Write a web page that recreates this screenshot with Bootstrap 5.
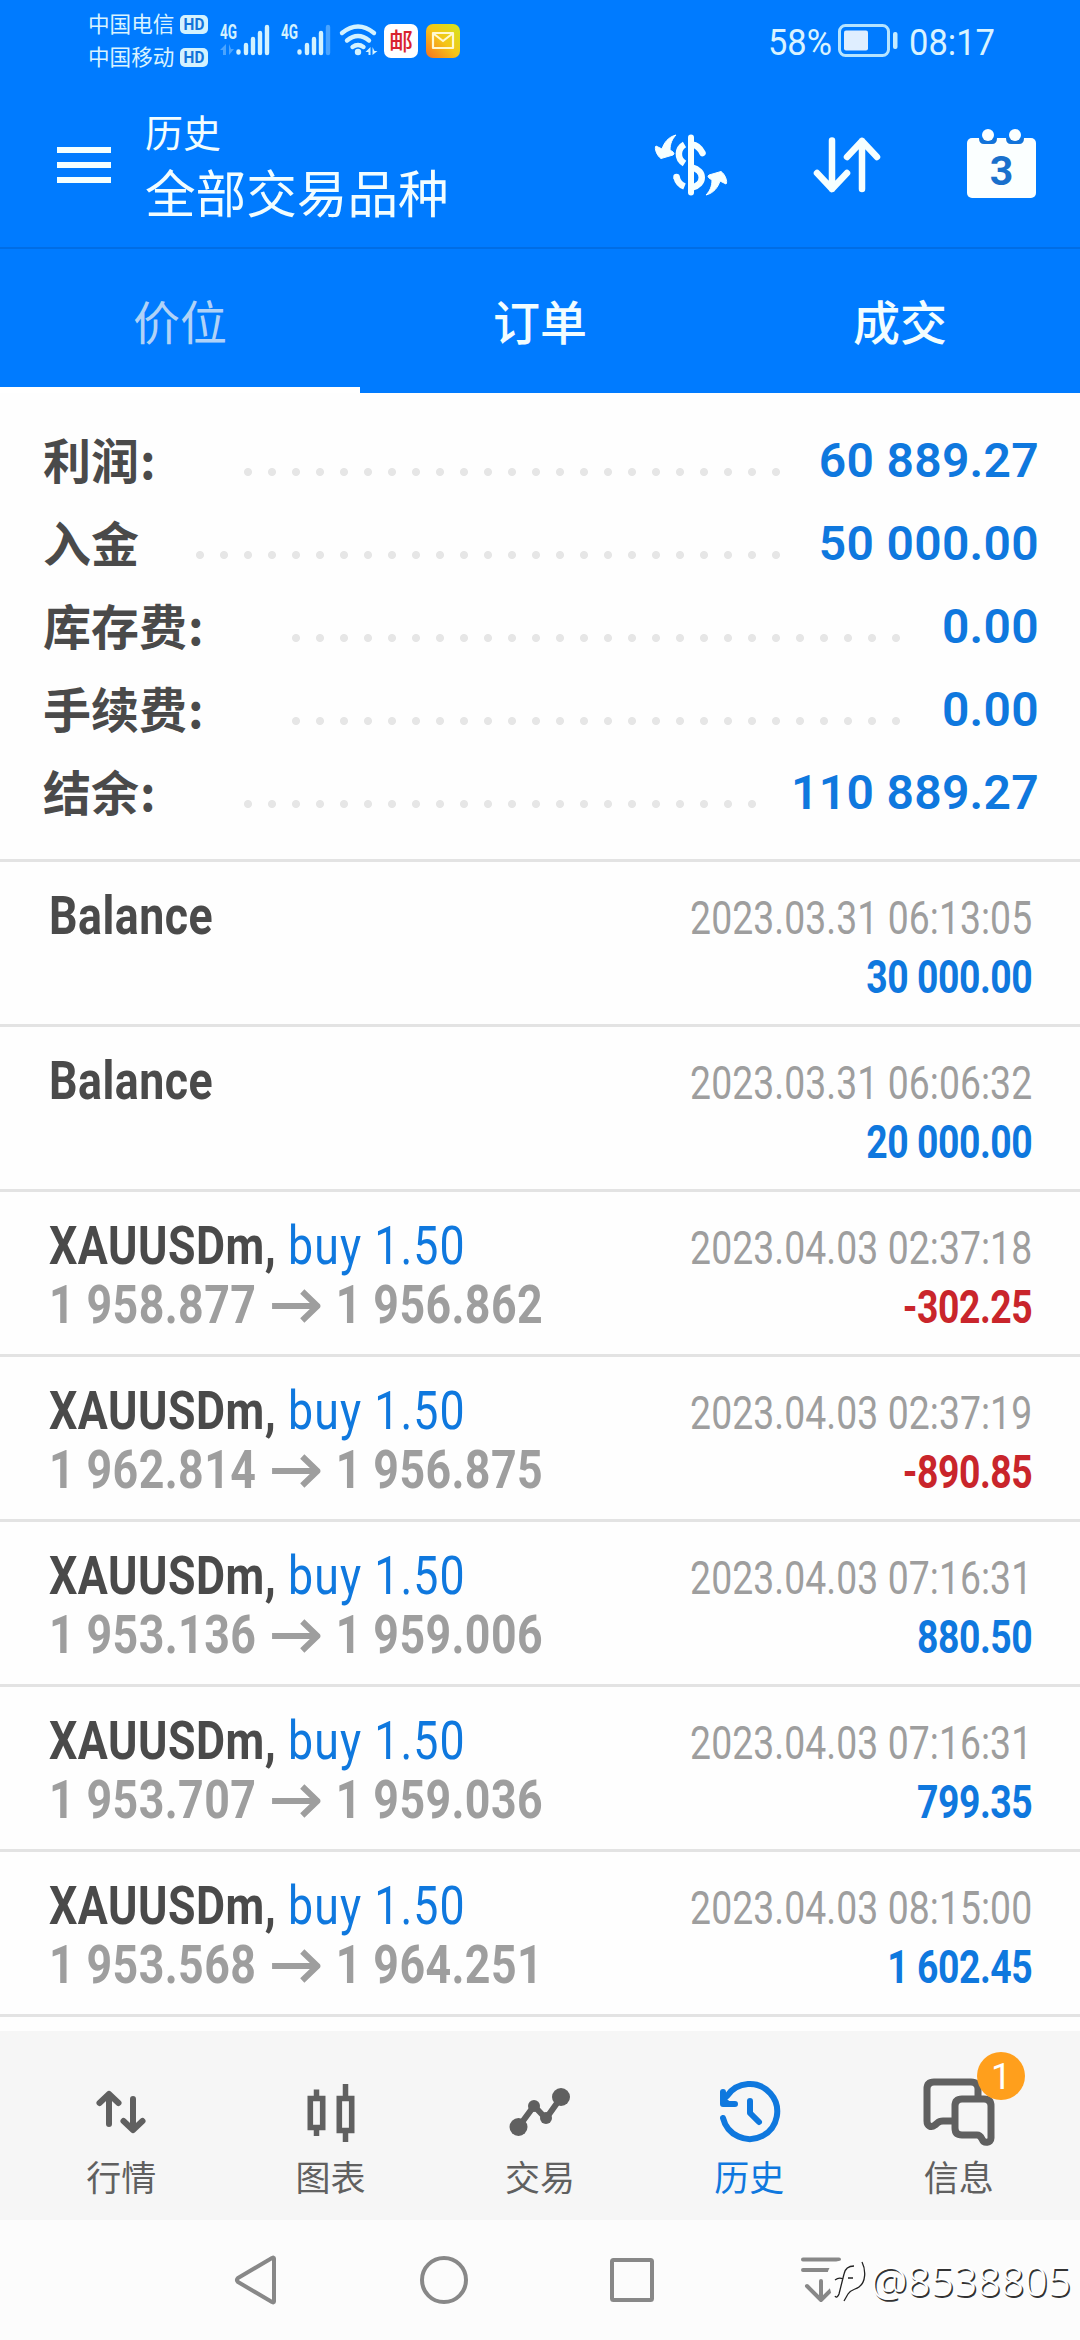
<!DOCTYPE html>
<html lang="zh-CN">
<head>
<meta charset="utf-8">
<meta name="viewport" content="width=device-width, initial-scale=1">
<title>历史</title>
<link href="https://cdn.jsdelivr.net/npm/bootstrap@5.3.0/dist/css/bootstrap.min.css" rel="stylesheet">
<style>
:root { --app-blue:#007bff; --num-blue:#0f78de; --ink:#4a4a4a; --muted:#9e9e9e; }
body { font-family:Roboto,"Noto Sans CJK SC",sans-serif; width:1080px; height:2340px; overflow:hidden; color:var(--ink); background:#fefefe; }
svg { display:block; overflow:visible; }
.on-blue { background:var(--app-blue); color:#f2fdff; }
.statusbar { height:82px; padding:8px 88px 0 88px; color:#d9f3ff; }
.carrier { font-size:21.6px; line-height:33px; }
.hd { width:28px; height:19px; border-radius:5px; background:#d3f2ff; color:#1273da; font-size:17px; line-height:19px; font-weight:700; margin-left:6px; text-align:center; }
.hd span { display:block; transform:scaleX(.9); }
.st-icons { margin:6px 0 0 1px; }
.appbar { height:165px; padding-left:57px; padding-right:44px; }
.burger { width:54px; height:36px; margin-top:65px; }
.burger i { height:6px; background:#f4ffff; }
.title-box { margin:29px 0 0 34px; }
.t1 { font-size:38px; line-height:46px; }
.t2 { font-size:50.6px; line-height:72px; margin-top:3px; }
.tool-icons { margin-top:41px; }
.tabs-top { height:146px; border-top:2px solid #006de5; }
.tabs-top .nav-link { height:144px; font-size:47px; line-height:150px; padding:0; color:#f2fdff; border-radius:0; font-weight:500; }
.tabs-top .nav-link.active { color:#b0d2f7; font-weight:400; background:linear-gradient(#fff,#fff) bottom/100% 6px no-repeat; }
.summary { height:469px; padding:26px 43px 0 43px; border-bottom:3px solid #e3e3e3; }
.sum-row { height:83px; line-height:83px; }
.sum-row dt { font-family:"Noto Sans CJK SC",sans-serif; font-size:48px; line-height:79px; font-weight:700; padding:0 49px 0 0; height:83px; }
.sum-row dt.with-colon::after { content:""; display:inline-block; width:31px; }
.sum-row dt i { display:inline-block; width:16px; font-style:normal; margin-left:1px; }
.sum-row dd { font-size:48px; font-weight:600; color:var(--num-blue); margin:0 -2px 0 0; letter-spacing:.3px; }
.leader { height:8px; margin-top:22px; background:radial-gradient(circle,#e6e6e6 3.6px,transparent 4.4px) 0 0/24px 8px; }
.deal { height:165px; border-bottom:3px solid #e3e3e3; padding:24px 49px 0 49px; }
.deal .cond { transform:scaleX(.82); transform-origin:0 0; white-space:nowrap; font-size:54.5px; line-height:59px; }
.deal .rt { padding-top:3px; font-size:45.5px; line-height:59px; white-space:nowrap; color:var(--muted); letter-spacing:.1px; text-align:right; transform:scaleX(.82); transform-origin:100% 0; flex:none; margin:0 -1px 0 -60px; }
.sym { font-weight:700; color:var(--ink); letter-spacing:.6px; }
.side { color:var(--num-blue); letter-spacing:1.3px; margin-left:1px; }
.prices { font-weight:700; color:var(--muted); letter-spacing:.5px; }
.prices svg { display:inline-block; vertical-align:baseline; margin:0 19px 0 19px; }
.amt { font-weight:700; color:var(--num-blue); letter-spacing:-.55px; }
.neg { color:#c9252b; }
.list-box { height:1169px; }
.tabs-bottom { height:189px; background:#f6f6f6; padding:0 16.5px; color:#606060; }
.tabs-bottom a { width:209.4px; color:#606060; text-decoration:none; font-size:35px; line-height:50px; padding-top:31px; }
.tabs-bottom a.active { color:var(--num-blue); }
.tabs-bottom svg { margin:0 auto 3px; }
.msg-badge { width:48px; height:48px; left:123px; top:21px; background:#ff9f1c; color:#fff; font-size:36px; line-height:51px; text-align:center; }
.sysnav { height:120px; background:#fcfcfc; }
.wm { right:9px; bottom:35px; gap:5px; font-size:41px; line-height:50px; font-weight:300; color:#fff; text-shadow:1.5px 1.5px .5px #333; font-family:"Noto Sans",sans-serif; }
</style>
<script src="https://cdn.jsdelivr.net/npm/bootstrap@5.3.0/dist/js/bootstrap.bundle.min.js"></script>
</head>
<body class="d-flex flex-column position-relative">

<header class="on-blue">
  <div class="statusbar d-flex">
    <div class="carrier">
      <div class="d-flex align-items-center">中国电信<div class="hd"><span>HD</span></div></div>
      <div class="d-flex align-items-center">中国移动<div class="hd"><span>HD</span></div></div>
    </div>
    <svg class="st-icons flex-shrink-0" width="260" height="50" viewBox="209 14 260 50">
      <g fill="#d3f2ff" font-family="Roboto" font-weight="700" font-size="20">
        <text x="220" y="39" textLength="17" lengthAdjust="spacingAndGlyphs">4G</text>
        <text x="281" y="39" textLength="17" lengthAdjust="spacingAndGlyphs">4G</text>
      </g>
      <g stroke="#d3f2ff" stroke-width="4.4" stroke-linecap="round">
        <path d="M238.500 51.500v1M246 45v8M253 39v14M260 33v20M267 27v26"/>
        <path d="M299.500 51.500v1M307 45v8M314 39v14M321 33v20"/>
        <path d="M328 27v26" opacity=".35"/>
      </g>
      <path d="M226 44v11h-3v-5h-3zM229 44v11l5-6h-3z" fill="#d3f2ff" opacity=".35"/>
      <g fill="none" stroke="#d3f2ff" stroke-width="4.400" stroke-linecap="round">
        <path d="M342 33q16-13 32 0M347 40.500q11-9 22 0M352.500 47q5.500-4 11 0"/>
      </g>
      <circle cx="358" cy="52" r="3.200" fill="#d3f2ff"/>
      <path d="M370.500 47v8h-2v-3h-3zM372.500 47v8l5-4h-3z" fill="#d3f2ff"/>
      <rect x="384" y="24" width="34" height="34" rx="7" fill="#fff"/>
      <text x="389" y="50" font-family="Noto Sans CJK SC" font-weight="500" font-size="24" fill="#d8232f">邮</text>
      <defs><linearGradient id="mg" x1="1" y1="0" x2="0" y2="1"><stop offset="0" stop-color="#d3e61c"/><stop offset=".5" stop-color="#f5c518"/><stop offset="1" stop-color="#f7701e"/></linearGradient></defs>
      <rect x="426" y="24" width="34" height="34" rx="7" fill="url(#mg)"/>
      <path d="M433 33h20v15h-20zM434 34l9 7 9-7" fill="none" stroke="#fff8d0" stroke-width="2.200" stroke-linejoin="round"/>
    </svg>
    <div class="ms-auto pt-3">
      <svg width="223" height="40" viewBox="769 24 223 40">
        <g fill="#d9f3ff" font-family="Roboto" font-size="36">
          <text x="768" y="54.500" textLength="64" lengthAdjust="spacingAndGlyphs">58%</text>
          <text x="909" y="54.500" textLength="86" lengthAdjust="spacingAndGlyphs">08:17</text>
        </g>
        <rect x="839.500" y="25.500" width="49" height="30" rx="6" fill="none" stroke="#b5e4ff" stroke-width="3"/>
        <rect x="844" y="30.500" width="24" height="20" rx="2" fill="#dfeeff"/>
        <rect x="893" y="32" width="4.500" height="17" rx="2" fill="#c6ecff"/>
      </svg>
    </div>
  </div>

  <div class="appbar d-flex">
    <div class="burger d-flex flex-column justify-content-between"><i></i><i></i><i></i></div>
    <div class="title-box"><div class="t1">历史</div><div class="t2">全部交易品种</div></div>
    <svg class="tool-icons ms-auto" width="382" height="80" viewBox="653 123 382 80">
      <!-- currency exchange -->
      <g fill="none" stroke="#f6ffff" stroke-linecap="round">
        <path d="M690 137.500v55" stroke-width="6"/>
        <path d="M701.500 153C699 148 696 145 691 144.500M691 167.500c13 3 13 17 0 20" stroke-width="6.500"/>
        <path d="M683.500 144.500c-7 4-8 14 0 19M683.500 186.500c-5-2-7-5-8-9.500" stroke-width="6.500" stroke-linecap="butt"/>
        <path d="M675.500 177v.1" stroke-width="6.500"/>
      </g>
      <g fill="#f6ffff" stroke="#f6ffff" stroke-linejoin="round">
        <path d="M675 135C667 137 663 143 661 149L655 146C653 148 656 156 660 158.500L672 155q2-1 0-3L669 150C669 144 671 139 675 135z"/>
        <path d="M705 195C713 193 717 187 719 181L725 184C727 182 724 174 720 171.500L708 175q-2 1 0 3L711 180C711 186 709 191 705 195z"/>
      </g>
      <!-- sort arrows -->
      <path d="M831 140.500V189M816 173l15 16 15-16M861 189V141M846 157l15-16 15 16" fill="none" stroke="#f6ffff" stroke-width="6.500" stroke-linecap="round" stroke-linejoin="round"/>
      <!-- calendar -->
      <rect x="966" y="138" width="69" height="60" rx="5" fill="#fbffff"/>
      <path d="M978 138q0 6 5 6h8q5 0 5-6zM1005 138q0 6 5 6h8q5 0 5-6z" fill="#1273da"/>
      <circle cx="987" cy="135" r="6" fill="#fbffff"/><circle cx="1014" cy="135" r="6" fill="#fbffff"/>
      <text x="1000.500" y="185" text-anchor="middle" font-family="Roboto" font-weight="700" font-size="41" fill="#1a70cc">3</text>
    </svg>
  </div>

  <nav class="tabs-top nav nav-justified">
    <a class="nav-link active col-4">价位</a><a class="nav-link col-4">订单</a><a class="nav-link col-4">成交</a>
  </nav>
</header>

<dl class="summary mb-0">
  <div class="sum-row d-flex"><dt class="with-colon">利润<i>:</i></dt><span class="leader align-self-center" style="width:552px"></span><dd class="ms-auto">60 889.27</dd></div>
  <div class="sum-row d-flex"><dt>入金</dt><span class="leader align-self-center" style="width:600px"></span><dd class="ms-auto">50 000.00</dd></div>
  <div class="sum-row d-flex"><dt class="with-colon">库存费<i>:</i></dt><span class="leader align-self-center" style="width:624px"></span><dd class="ms-auto">0.00</dd></div>
  <div class="sum-row d-flex"><dt class="with-colon">手续费<i>:</i></dt><span class="leader align-self-center" style="width:624px"></span><dd class="ms-auto">0.00</dd></div>
  <div class="sum-row d-flex"><dt class="with-colon">结余<i>:</i></dt><span class="leader align-self-center" style="width:528px"></span><dd class="ms-auto">110 889.27</dd></div>
</dl>

<svg width="0" height="0" class="position-absolute"><symbol id="arr" viewBox="0 0 48 34" preserveAspectRatio="none"><path d="M0 17h45M30 2.500L45 17 30 31.500" fill="none" stroke="#9e9e9e" stroke-width="6"/></symbol></svg>

<main class="list-box">
  <div class="deal d-flex justify-content-between"><div class="cond"><div class="sym">Balance</div></div><div class="rt"><div>2023.03.31 06:13:05</div><div class="amt">30 000.00</div></div></div>
  <div class="deal d-flex justify-content-between"><div class="cond"><div class="sym">Balance</div></div><div class="rt"><div>2023.03.31 06:06:32</div><div class="amt">20 000.00</div></div></div>
  <div class="deal d-flex justify-content-between"><div class="cond"><div><span class="sym">XAUUSDm,</span> <span class="side">buy 1.50</span></div><div class="prices">1 958.877<svg width="59" height="34"><use href="#arr"/></svg>1 956.862</div></div><div class="rt"><div>2023.04.03 02:37:18</div><div class="amt neg">-302.25</div></div></div>
  <div class="deal d-flex justify-content-between"><div class="cond"><div><span class="sym">XAUUSDm,</span> <span class="side">buy 1.50</span></div><div class="prices">1 962.814<svg width="59" height="34"><use href="#arr"/></svg>1 956.875</div></div><div class="rt"><div>2023.04.03 02:37:19</div><div class="amt neg">-890.85</div></div></div>
  <div class="deal d-flex justify-content-between"><div class="cond"><div><span class="sym">XAUUSDm,</span> <span class="side">buy 1.50</span></div><div class="prices">1 953.136<svg width="59" height="34"><use href="#arr"/></svg>1 959.006</div></div><div class="rt"><div>2023.04.03 07:16:31</div><div class="amt">880.50</div></div></div>
  <div class="deal d-flex justify-content-between"><div class="cond"><div><span class="sym">XAUUSDm,</span> <span class="side">buy 1.50</span></div><div class="prices">1 953.707<svg width="59" height="34"><use href="#arr"/></svg>1 959.036</div></div><div class="rt"><div>2023.04.03 07:16:31</div><div class="amt">799.35</div></div></div>
  <div class="deal d-flex justify-content-between"><div class="cond"><div><span class="sym">XAUUSDm,</span> <span class="side">buy 1.50</span></div><div class="prices">1 953.568<svg width="59" height="34"><use href="#arr"/></svg>1 964.251</div></div><div class="rt"><div>2023.04.03 08:15:00</div><div class="amt">1 602.45</div></div></div>
</main>

<nav class="tabs-bottom d-flex text-center">
  <a><svg width="90" height="90" viewBox="77 2062 90 90"><path d="M110 2124v-29M100.500 2103l9.500-9 9.500 9M134 2099v29M124.500 2121l9.500 9 9.500-9" fill="none" stroke="currentColor" stroke-width="6" stroke-linecap="round" stroke-linejoin="round"/></svg>行情</a>
  <a><svg width="90" height="90" viewBox="286 2062 90 90"><g fill="none" stroke="currentColor"><path d="M316.500 2089.500v8M316.500 2128v8M345.500 2084v14M345.500 2131v11" stroke-width="5.500"/><path d="M310.300 2098.500h12.400v29h-12.400zM339.300 2098.500h12.400v32h-12.400z" stroke-width="5.600"/></g></svg>图表</a>
  <a><svg width="90" height="90" viewBox="495 2062 90 90"><path d="M518.500 2127l15.500-21 12 12.500 15-21" fill="none" stroke="currentColor" stroke-width="6"/><g fill="currentColor"><circle cx="518.500" cy="2127" r="9"/><circle cx="534" cy="2106" r="6"/><circle cx="546" cy="2118" r="6"/><circle cx="561" cy="2097" r="9"/></g></svg>交易</a>
  <a class="active"><svg width="90" height="90" viewBox="703 2061 90 90"><g fill="none" stroke="currentColor" stroke-width="6" stroke-linecap="round" stroke-linejoin="round"><path d="M722 2117a27.500 27.500 0 1 0 4-22"/><path d="M749 2100v12l9 9M722 2091v12h12"/></g><path d="M720 2090v14h14l-7-5z" fill="currentColor"/></svg>历史</a>
  <a class="position-relative"><svg width="90" height="90" viewBox="913 2062 90 90"><g stroke="currentColor" stroke-width="7" fill="none" stroke-linejoin="round"><path d="M951 2121h-9c-5 0-5 2-8 4-4 3-8 1-8-4v-32q0-7 7-7h37q7 0 7 7v10"/><path d="M961 2099h22q7 0 7 7v32c0 5-7 6-9 1-1-2-2-4-5-4h-15q-7 0-7-7v-22q0-7 7-7z" fill="#f6f6f6"/></g></svg>信息<span class="msg-badge position-absolute rounded-circle">1</span></a>
</nav>

<div class="sysnav">
  <svg width="1080" height="120" viewBox="0 2220 1080 120" fill="none" stroke="#888" stroke-width="4" stroke-linejoin="round" stroke-linecap="round">
    <path d="M274 2258.500v43q0 1.500-2 .5l-34-20q-2-2 0-4l34-20q2-1 2 .5z"/>
    <circle cx="444" cy="2280" r="22"/>
    <rect x="612" y="2260" width="40" height="40" rx="1.500"/>
    <path d="M803 2259.500h36M803 2270h36M821 2281v19M807 2286l14 14 14-14"/>
  </svg>
</div>

<div class="wm position-absolute d-flex align-items-center">
  <svg width="39" height="44" viewBox="829 2261 39 44"><path d="M829 2281c0-12 8-18 18-18h6c10 0 14 7 14 17s-5 15-12 15l-9 7-12-3z" fill="#fdfdfd"/><path d="M837 2299c1 2 3 1 4-2l5-20c1-5 4-8 10-8M837 2283q4-3 8-1M850 2281h5M864 2265c4 8 4 20-3 25-4 3-8 2-11 7l-4 7" fill="none" stroke="#222" stroke-width="1.300"/></svg>
  <span>@8538805</span>
</div>
</body>
</html>
